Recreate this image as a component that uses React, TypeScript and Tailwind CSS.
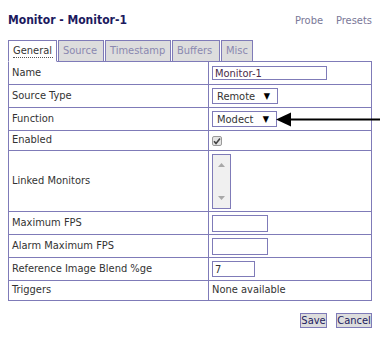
const rows = [
  { label: "Name", h: "h-[23px]", kind: "name" },
  { label: "Source Type", h: "h-[23px]", kind: "source" },
  { label: "Function", h: "h-[23px]", kind: "function" },
  { label: "Enabled", h: "h-[20px]", kind: "enabled" },
  { label: "Linked Monitors", h: "h-[61px]", kind: "linked" },
  { label: "Maximum FPS", h: "h-[23px]", kind: "maxfps" },
  { label: "Alarm Maximum FPS", h: "h-[23px]", kind: "alarmfps" },
  { label: "Reference Image Blend %ge", h: "h-[23px]", kind: "blend" },
  { label: "Triggers", h: "h-[20px]", kind: "triggers" },
];

const tabs = [
  { name: "General", w: "w-[49px]", active: true },
  { name: "Source", w: "w-[46px]" },
  { name: "Timestamp", w: "w-[66px]" },
  { name: "Buffers", w: "w-[48px]" },
  { name: "Misc", w: "w-[32px]" },
];

function Select({ value, w }: { value: string; w: string }) {
  return (
    <div className={`${w} h-[16px] border border-[#7f7bb8] flex items-center justify-between pl-[4px] pr-[7px] leading-none`}>
      <span>{value}</span>
      <span className="text-[9px] text-black">▼</span>
    </div>
  );
}

function Field({ kind }: { kind: string }) {
  switch (kind) {
    case "name":
      return (
        <div className="w-[115px] h-[14px] border border-[#7f7bb8] pl-[2px] flex items-center leading-none text-[#4a2a4a]">
          Monitor-1
        </div>
      );
    case "source":
      return <Select value="Remote" w="w-[66px]" />;
    case "function":
      return <Select value="Modect" w="w-[65px]" />;
    case "enabled":
      return (
        <div className="w-[10px] h-[10px] rounded-[2px] border border-[#9a9a9a] bg-[#e4e4e4] flex items-center justify-center">
          <svg width="8" height="8" viewBox="0 0 8 8">
            <path d="M1 4.2 L3 6.4 L7 1.4" fill="none" stroke="#444" strokeWidth="1.6" />
          </svg>
        </div>
      );
    case "linked":
      return (
        <div className="w-[19px] h-[55px] border border-[#7f7bb8] bg-[#f0f0f0] flex flex-col items-center justify-between py-[8px]">
          <svg width="7" height="4" viewBox="0 0 7 4">
            <path d="M0 4 L3.5 0 L7 4 Z" fill="#a8a8a8" />
          </svg>
          <svg width="7" height="4" viewBox="0 0 7 4">
            <path d="M0 0 L7 0 L3.5 4 Z" fill="#a8a8a8" />
          </svg>
        </div>
      );
    case "maxfps":
    case "alarmfps":
      return <div className="w-[56px] h-[17px] border border-[#7f7bb8]" />;
    case "blend":
      return (
        <div className="w-[43px] h-[16px] border border-[#7f7bb8] pl-[2px] flex items-center leading-none">7</div>
      );
    default:
      return <span>None available</span>;
  }
}

export default function App() {
  return (
    <div className="relative w-[380px] h-[364px] bg-white font-['DejaVu_Sans_Condensed','DejaVu_Sans',sans-serif] text-[11px] text-[#333333]">
      <div className="ml-[8px] w-[364px] pt-[12px]">
        <div className="flex items-end justify-between h-[14px]">
          <h2 className="font-bold text-[12px] leading-none text-[#1c1a5e]">Monitor - Monitor-1</h2>
          <div className="flex gap-[13px] text-[#7a7898] leading-none">
            <span>Probe</span>
            <span>Presets</span>
          </div>
        </div>

        <div className="mt-[14px] flex gap-[1px] h-[21px] relative z-10">
          {tabs.map((t) => (
            <div
              key={t.name}
              className={`${t.w} border border-[#7f7bb8] flex items-center pl-[4px] ${
                t.active ? "bg-white border-b-white h-[22px] text-[#333333]" : "bg-[#dddddd] border-b-0 h-[21px] text-[#8a88b0]"
              }`}
            >
              {t.active ? (
                <span className="border-b border-dotted border-[#555] leading-[13px] pr-[1px]">{t.name}</span>
              ) : (
                t.name
              )}
            </div>
          ))}
        </div>

        <div className="border border-[#7f7bb8] border-b-0">
          {rows.map((r) => (
            <div key={r.label} className={`${r.h} flex border-b border-[#7f7bb8]`}>
              <div className="w-[200px] border-r border-[#7f7bb8] pl-[3px] flex items-center">{r.label}</div>
              <div className="flex-1 pl-[3px] flex items-center">
                <Field kind={r.kind} />
              </div>
            </div>
          ))}
        </div>

        <div className="mt-[12px] flex justify-end gap-[9px] text-[#1c1a5e]">
          <button className="w-[27px] h-[15px] border border-[#7f7bb8] bg-[#dddddd] leading-none flex items-center justify-center">Save</button>
          <button className="w-[36px] h-[15px] border border-[#7f7bb8] bg-[#dddddd] leading-none flex items-center justify-center">Cancel</button>
        </div>
      </div>

      <svg className="absolute left-[276px] top-[111px]" width="104" height="17" viewBox="0 0 104 17">
        <path d="M0 8.5 L15 1.5 L15 15.5 Z" fill="#000" />
        <rect x="14" y="7.5" width="90" height="2" fill="#000" />
      </svg>
    </div>
  );
}
